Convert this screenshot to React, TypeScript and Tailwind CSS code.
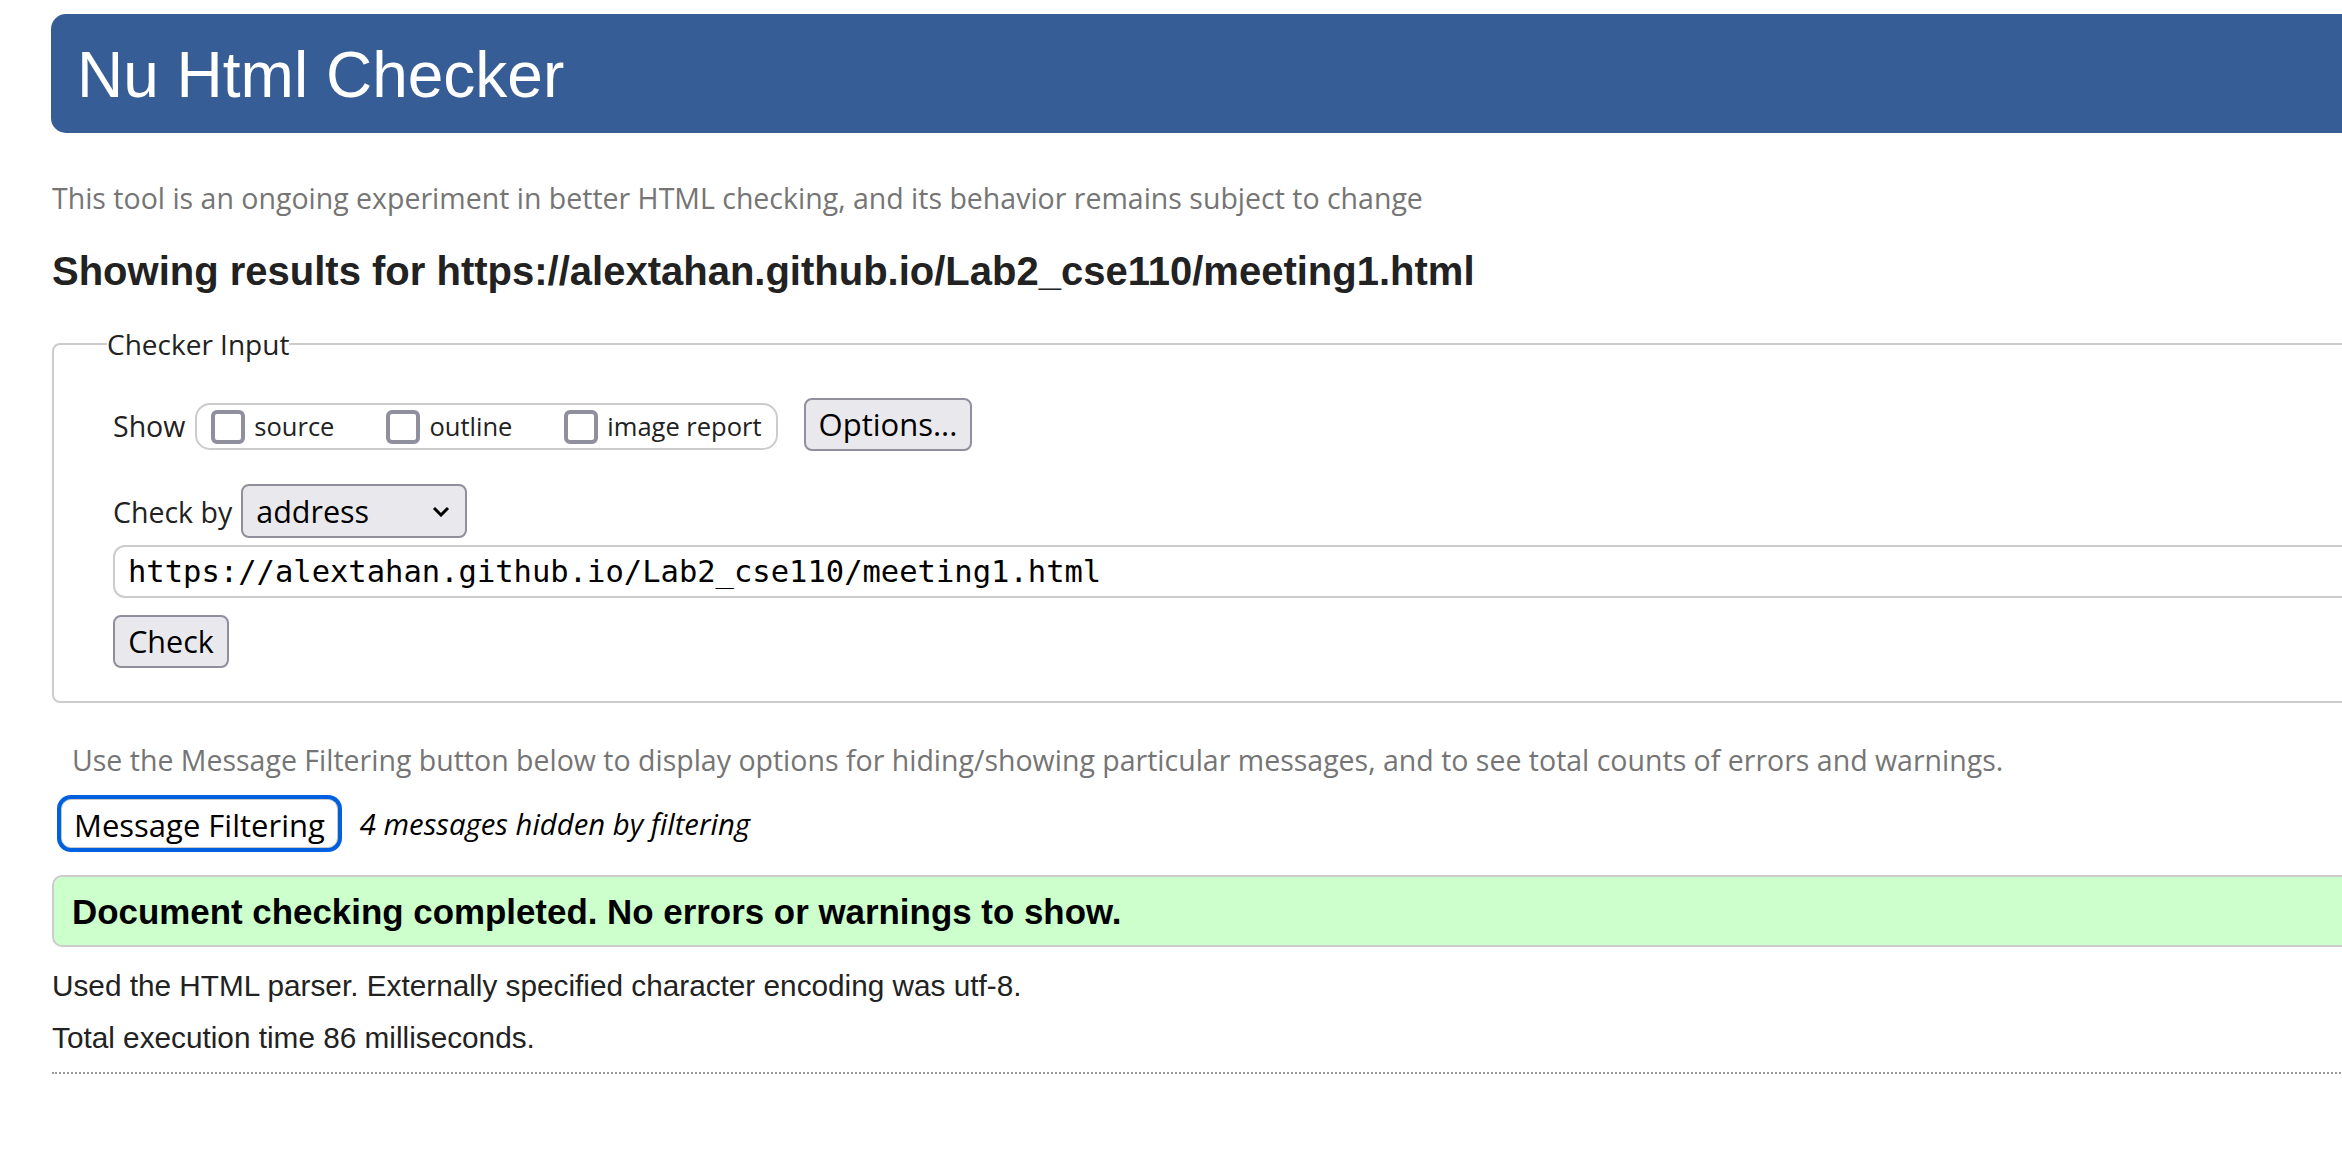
import { useState } from 'react'

const urlValue = 'https://alextahan.github.io/Lab2_cse110/meeting1.html'

function Box({ label }: { label: string }) {
  const [on, setOn] = useState(false)
  return (
    <label className="flex items-center">
      <input
        type="checkbox"
        checked={on}
        onChange={() => setOn(!on)}
        className="m-0 h-[34px] w-[34px] appearance-none rounded-[6px] border-4 border-[#8f8f9d] bg-white"
      />
      <span className="ml-[9px] text-[25.5px] leading-none">{label}</span>
    </label>
  )
}

export default function App() {
  const [url, setUrl] = useState(urlValue)

  return (
    <div className="min-h-screen w-full overflow-hidden bg-white">
      <div className="w-[2700px] pl-[52px] pt-[14px] font-['Open_Sans',sans-serif] text-[#222]">
        {/* Header */}
        <header className="-ml-px h-[119px] rounded-l-[15px] bg-[#375d96] pl-[26px] pt-[29px]">
          <h1 className="font-['Liberation_Sans',Arial,sans-serif] text-[64px] leading-none text-white">
            Nu Html Checker
          </h1>
        </header>

        <p className="mt-[45px] text-[28.5px] leading-[40px] text-[#757575]">
          This tool is an ongoing experiment in better HTML checking, and its behavior remains subject to change
        </p>

        <h2 className="mt-[29px] font-['Liberation_Sans',Arial,sans-serif] text-[40px] font-bold leading-[48px] text-[#222]">
          Showing results for {urlValue}
        </h2>

        {/* Checker Input */}
        <fieldset className="mt-[31px] rounded-[8px] border-2 border-[#cccccc] pb-[33px] pl-[53px]">
          <legend className="p-0 text-[28px] leading-[36px]">Checker Input</legend>
          <div className="pl-[6px]">
            <div className="mt-[36px] flex h-[53px] items-start">
              <span className="text-[28.5px] leading-[56px]">Show</span>
              <div className="ml-[10px] mt-[5px] flex h-[47px] items-center gap-[52px] rounded-[15px] border-2 border-[#cccccc] pl-[14px] pr-[14px]">
                <Box label="source" />
                <Box label="outline" />
                <Box label="image report" />
              </div>
              <button className="ml-[26px] flex h-[53px] items-center rounded-[8px] border-2 border-[#8f8f9d] bg-[#e9e9ed] px-[13px] text-[31px] leading-none text-black">
                Options...
              </button>
            </div>

            <div className="mt-[33px] flex h-[54px] items-start">
              <span className="text-[28.5px] leading-[56px]">Check by</span>
              <div className="ml-[9px] flex h-[54px] w-[226px] items-center justify-between rounded-[8px] border-2 border-[#8f8f9d] bg-[#e9e9ed] pl-[13px] pr-[15px]">
                <span className="text-[30.5px] leading-none text-black">address</span>
                <svg width="18" height="11" viewBox="0 0 18 11" fill="none">
                  <polyline points="2,2 9,9 16,2" stroke="#000" strokeWidth="3" />
                </svg>
              </div>
            </div>

            <input
              value={url}
              onChange={(e) => setUrl(e.target.value)}
              className="mt-[7px] block h-[53px] w-[2600px] rounded-[12px] border-2 border-[#cccccc] pl-[13px] font-['DejaVu_Sans_Mono',monospace] text-[30.5px] leading-none text-black outline-none"
            />

            <button className="mt-[17px] flex h-[53px] w-[116px] items-center justify-center rounded-[8px] border-2 border-[#8f8f9d] bg-[#e9e9ed] text-[30.5px] leading-none text-black">
              Check
            </button>
          </div>
        </fieldset>

        <p className="mt-[37px] pl-[20px] text-[28.5px] leading-[40px] text-[#757575]">
          Use the Message Filtering button below to display options for hiding/showing particular messages, and to see total counts of errors and warnings.
        </p>

        <div className="mt-[19px] flex items-center">
          <button className="ml-[9px] flex h-[49px] items-center rounded-[10px] border border-[#c8c8c8] bg-white pl-[12px] pr-[12px] pt-[3px] text-[31px] leading-none text-black ring-4 ring-[#0060df]">
            Message Filtering
          </button>
          <span className="ml-[22px] pt-[3px] text-[29.3px] italic leading-none text-black">4 messages hidden by filtering</span>
        </div>

        {/* Result */}
        <div className="mt-[27px] h-[72px] rounded-[10px] border-2 border-[#cccccc] bg-[#ccffcc] pl-[18px] pt-px">
          <p className="font-['Liberation_Sans',Arial,sans-serif] text-[34.9px] font-bold leading-[67px] text-black">
            Document checking completed. No errors or warnings to show.
          </p>
        </div>

        <div className="font-['Liberation_Sans',Arial,sans-serif] text-[29.75px] leading-[40px] text-[#222]">
          <p className="mt-[19px]">Used the HTML parser. Externally specified character encoding was utf-8.</p>
          <p className="mt-[12px]">Total execution time 86 milliseconds.</p>
        </div>

        <hr className="mt-[14px] border-0 border-t-2 border-dotted border-[#9a9a9a]" />
      </div>
    </div>
  )
}
